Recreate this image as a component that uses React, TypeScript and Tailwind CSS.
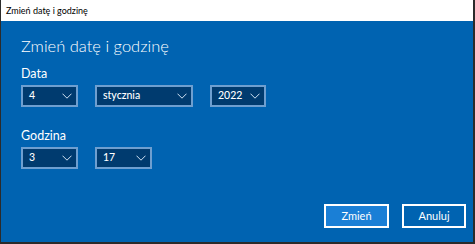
import React from 'react';

const Chevron = () => (
  <svg width="10" height="6" viewBox="0 0 10 6" fill="none" className="shrink-0">
    <path d="M0.5 0.7 L5 5.2 L9.5 0.7" stroke="#cfe0f2" strokeWidth="1" />
  </svg>
);

const Select = ({ value, width }: { value: string; width: string }) => (
  <div
    className={`${width} h-[22px] flex items-center justify-between pl-[6px] pr-[4px] bg-[#003b6f] border-2 border-[#6e9fd0] text-white text-[10.5px] font-medium`}
  >
    <span>{value}</span>
    <Chevron />
  </div>
);

export default function App() {
  return (
    <div
      className="w-[475px] h-[244px] flex flex-col bg-[#2b2b2b] pr-[2px] pb-[2px] pl-[1px]"
      style={{ fontFamily: 'Lato, "Noto Sans", sans-serif' }}
    >
      <div className="h-[21px] bg-white flex items-center pl-[5px] text-[9px] text-black">
        Zmień datę i godzinę
      </div>
      <div className="flex-1 bg-[#0063b1] flex flex-col pl-[20px] pr-[6px]">
        <div className="text-white text-[16.5px] font-light mt-[12px] leading-[26px]">
          Zmień datę i godzinę
        </div>
        <div className="text-white text-[12.5px] mt-[7px] leading-[16px]">Data</div>
        <div className="flex gap-[17px] mt-[3px]">
          <Select value="4" width="w-[57px]" />
          <Select value="stycznia" width="w-[98px]" />
          <Select value="2022" width="w-[56px]" />
        </div>
        <div className="text-white text-[12.5px] mt-[21px] leading-[16px]">Godzina</div>
        <div className="flex gap-[17px] mt-[3px]">
          <Select value="3" width="w-[57px]" />
          <Select value="17" width="w-[57px]" />
        </div>
        <div className="flex justify-end gap-[13px] mt-auto mb-[14px] pr-[1px]">
          <button className="w-[65px] h-[24px] bg-[#1a7fd6] border-2 border-white text-white text-[11px]">
            Zmień
          </button>
          <button className="w-[64px] h-[24px] border-2 border-white text-white text-[11px]">
            Anuluj
          </button>
        </div>
      </div>
    </div>
  );
}
